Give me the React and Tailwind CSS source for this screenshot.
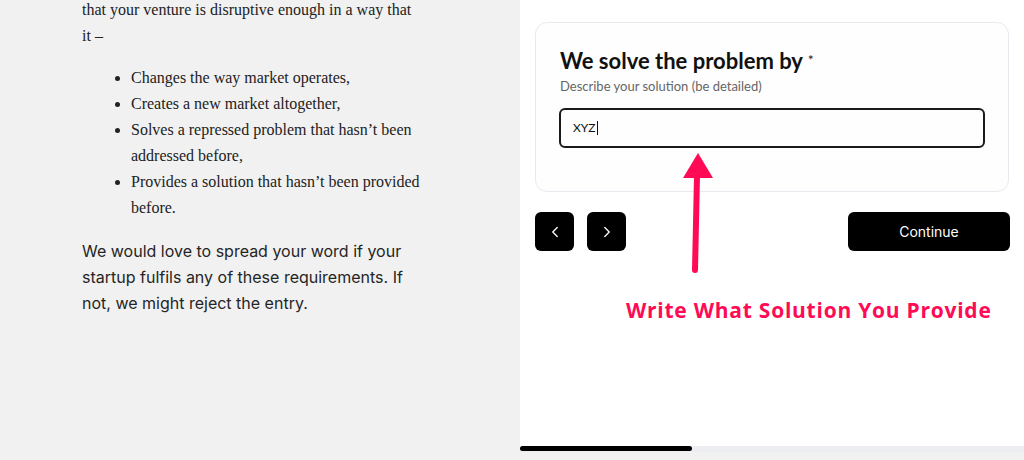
import React from 'react';
import { ChevronLeft, ChevronRight } from 'lucide-react';

const serif = { fontFamily: '"Liberation Serif", "Times New Roman", serif' };

const bullets = [
  'Changes the way market operates,',
  'Creates a new market altogether,',
  'Solves a repressed problem that hasn’t been addressed before,',
  'Provides a solution that hasn’t been provided before.',
];

const ArticleColumn = () => (
  <div className="w-[520px] shrink-0 bg-[#f1f1f1] pl-[82px] pr-[98px]">
    <p
      className="-mt-[3px] text-[16px] leading-[26px] text-[#222]"
      style={serif}
    >
      that your venture is disruptive enough in a way that it –
    </p>
    <ul
      className="mt-[16px] list-disc pl-[49px] text-[16px] leading-[26px] text-[#222]"
      style={serif}
    >
      {bullets.map((b) => (
        <li key={b}>{b}</li>
      ))}
    </ul>
    <p className="mt-[17px] font-['Inter',sans-serif] text-[16px] leading-[26px] text-[#252525]">
      We would love to spread your word if your startup fulfils any of these
      requirements. If not, we might reject the entry.
    </p>
  </div>
);

const NavButton = ({ children, label }) => (
  <button
    type="button"
    aria-label={label}
    className="flex h-[39px] w-[39px] items-center justify-center rounded-[6px] bg-black text-white"
  >
    {children}
  </button>
);

const FormColumn = () => (
  <div className="relative flex flex-1 flex-col bg-white">
    <div className="flex-1 px-[15px] pt-[22px] font-['Lato','Noto_Sans',sans-serif]">
      <div className="w-[474px] rounded-[12px] border border-[#e8eaf0] bg-[#fefefe] px-[23px] pt-[23px] pb-[43px]">
        <h2 className="pl-[1px] text-[22px] font-bold leading-[28px] text-[#111]">
          We solve the problem by{' '}
          <span className="align-[4px] text-[14px] font-normal text-[#222]">*</span>
        </h2>
        <p className="mt-[3px] pl-[1px] text-[13px] leading-[16px] text-[#666]">
          Describe your solution (be detailed)
        </p>
        <div className="mt-[14px] flex h-[40px] items-center rounded-[6px] border-2 border-[#1a1a1a] px-[12px]">
          <span className="text-[12px] text-[#111]">XYZ</span>
          <span className="ml-[1px] h-[14px] w-px bg-[#111]" />
        </div>
      </div>

      <div className="mt-[20px] flex w-[475px] items-center">
        <NavButton label="Previous">
          <ChevronLeft size={18} strokeWidth={1.75} />
        </NavButton>
        <div className="ml-[13px]">
          <NavButton label="Next">
            <ChevronRight size={18} strokeWidth={1.75} />
          </NavButton>
        </div>
        <button
          type="button"
          className="ml-auto -mt-[1px] h-[39px] w-[162px] rounded-[6px] bg-black font-['Inter',sans-serif] text-[14px] font-normal text-white"
        >
          Continue
        </button>
      </div>
    </div>

    {/* annotation overlay */}
    <svg
      className="pointer-events-none absolute left-[160px] top-[150px]"
      width="40"
      height="126"
      viewBox="0 0 40 126"
    >
      <path d="M17 26 L15 120" stroke="#ff0a55" strokeWidth="6" strokeLinecap="round" fill="none" />
      <path d="M18 3 L3 28 L33 28 Z" fill="#ff0a55" />
    </svg>
    <div className="pointer-events-none absolute left-[106px] top-[296px] font-['Open_Sans',sans-serif] text-[21px] font-bold leading-[28px] tracking-[0.75px] text-[#ff0a55]">
      Write What Solution You Provide
    </div>

    <div className="h-[6px] bg-[#eceef2]">
      <div className="h-[5px] w-[172px] rounded-full bg-black" />
    </div>
    <div className="h-[8px] bg-[#f1f1f1]" />
  </div>
);

export default function App() {
  return (
    <div className="flex h-[460px] w-[1024px] overflow-hidden">
      <ArticleColumn />
      <FormColumn />
    </div>
  );
}
